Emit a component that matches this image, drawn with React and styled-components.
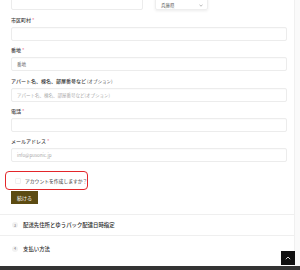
import React from "react";
import styled, { createGlobalStyle } from "styled-components";

const GlobalStyle = createGlobalStyle`
  html, body { margin: 0; padding: 0; background: #fff; }
  body { font-family: "Noto Sans CJK JP", "Noto Sans", sans-serif; color: #333; }
`;

const Page = styled.div`
  position: relative;
  width: 300px;
  height: 270px;
  overflow: hidden;
  background: #fff;
  display: flex;
  flex-direction: column;
`;

const Body = styled.div`
  flex: 1;
  display: flex;
`;

const Main = styled.div`
  flex: 1;
  display: flex;
  flex-direction: column;
  border-right: 1px solid #f0f0f0;
`;

const Side = styled.div`
  width: 5px;
  background: #fafafa;
`;

const Form = styled.div`
  padding: 0 7px 0 11px;
  display: flex;
  flex-direction: column;
`;

const TopRow = styled.div`
  display: flex;
  gap: 12px;
  margin-top: -4px;
  height: 14px;
`;

const HalfInput = styled.div`
  width: 132px;
  height: 14px;
  box-sizing: border-box;
  border: 1px solid #ececec;
  border-radius: 2px;
`;

const Select = styled.div`
  width: 53px;
  height: 14px;
  box-sizing: border-box;
  border: 1px solid #eee;
  border-radius: 2px;
  box-shadow: 0 1px 3px rgba(0, 0, 0, 0.08);
  display: flex;
  align-items: center;
  justify-content: space-between;
  padding: 4px 4px 0 5px;
  font-size: 4.5px;
  color: #555;
`;

const Field = styled.div`
  display: flex;
  flex-direction: column;
  margin-top: ${(p) => p.$top || 5}px;
`;

const Label = styled.div`
  height: 7px;
  line-height: 7px;
  font-size: 5px;
  font-weight: 500;
  color: #3a3a3a;
  margin-bottom: 4px;
  white-space: nowrap;
`;

const Req = styled.span`
  color: #e8708a;
  margin-left: 1px;
`;

const Opt = styled.span`
  font-size: 4.5px;
  font-weight: 400;
  color: #555;
`;

const Input = styled.div`
  height: 14px;
  box-sizing: border-box;
  border: 1px solid #ececec;
  border-radius: 2px;
  box-shadow: inset 0 1px 1px rgba(0, 0, 0, 0.02);
  display: flex;
  align-items: center;
  padding-left: 5px;
  font-size: 4.5px;
  color: ${(p) => (p.$filled ? "#666" : "#aaa")};
  white-space: nowrap;
`;

const Highlight = styled.div`
  margin: 9px 0 0 -6px;
  width: 83px;
  height: 19px;
  box-sizing: border-box;
  border: 1.2px solid #e3262a;
  border-radius: 4px;
  display: flex;
  align-items: center;
  gap: 4px;
  padding-left: 9px;
  font-size: 4.8px;
  color: #333;
  white-space: nowrap;
`;

const Check = styled.span`
  flex: none;
  width: 4px;
  height: 4px;
  border: 0.5px solid #f0f0f0;
  border-radius: 1px;
`;

const Button = styled.div`
  margin-top: 1px;
  width: 27px;
  height: 13px;
  background: #5c4b12;
  color: #fff;
  font-size: 5px;
  display: flex;
  align-items: center;
  justify-content: center;
`;

const Steps = styled.div`
  margin-top: 10px;
  display: flex;
  flex-direction: column;
`;

const Step = styled.div`
  height: ${(p) => p.$h}px;
  border-top: 1px solid #efefef;
  display: flex;
  align-items: center;
  gap: 5px;
  padding-left: 12px;
  font-size: 5.4px;
  font-weight: 500;
  color: #2a2a2a;
`;

const Num = styled.span`
  width: 6px;
  height: 6px;
  border-radius: 50%;
  background: #f2f2f2;
  color: #888;
  font-size: 3.6px;
  display: flex;
  align-items: center;
  justify-content: center;
`;

const Footer = styled.div`
  height: 4px;
  background: #333;
`;

const ToTop = styled.div`
  position: absolute;
  right: 5px;
  bottom: 5px;
  width: 14px;
  height: 14px;
  background: #111;
  display: flex;
  align-items: center;
  justify-content: center;
`;

export default function App() {
  return (
    <>
      <GlobalStyle />
      <Page>
        <Body>
          <Main>
            <Form>
              <TopRow>
                <HalfInput />
                <Select>
                  <span>兵庫県</span>
                  <svg width="4" height="3" viewBox="0 0 4 3">
                    <path d="M0.5 0.8 L2 2.2 L3.5 0.8" fill="none" stroke="#888" strokeWidth="0.6" />
                  </svg>
                </Select>
              </TopRow>
              <Field $top={6}>
                <Label>市区町村<Req>*</Req></Label>
                <Input />
              </Field>
              <Field>
                <Label>番地<Req>*</Req></Label>
                <Input $filled>番地</Input>
              </Field>
              <Field $top={6}>
                <Label>アパート名、棟名、部屋番号など <Opt>(オプション)</Opt></Label>
                <Input>アパート名、棟名、部屋番号など(オプション)</Input>
              </Field>
              <Field $top={5}>
                <Label>電話<Req>*</Req></Label>
                <Input />
              </Field>
              <Field>
                <Label>メールアドレス<Req>*</Req></Label>
                <Input>info@pusonic.jp</Input>
              </Field>
              <Highlight>
                <Check />
                アカウントを作成しますか？
              </Highlight>
              <Button>続ける</Button>
            </Form>
            <Steps>
              <Step $h={20}>
                <Num>3</Num>
                配送先住所とゆうパック配達日時指定
              </Step>
              <Step $h={25}>
                <Num>4</Num>
                支払い方法
              </Step>
            </Steps>
          </Main>
          <Side />
        </Body>
        <Footer />
        <ToTop>
          <svg width="6" height="4" viewBox="0 0 6 4">
            <path d="M0.8 3.2 L3 1 L5.2 3.2" fill="none" stroke="#fff" strokeWidth="0.8" />
          </svg>
        </ToTop>
      </Page>
    </>
  );
}
